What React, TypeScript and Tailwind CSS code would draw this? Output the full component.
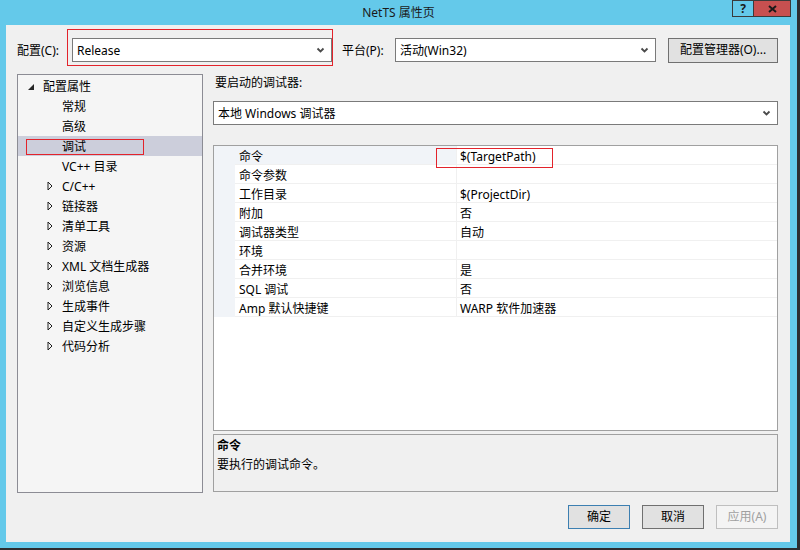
import React from 'react';

// ============================================
// Data
// ============================================

type TreeNode = { label: string; level: 0 | 1; expander?: 'open' | 'closed'; selected?: boolean };

const treeNodes: TreeNode[] = [
  { label: '配置属性', level: 0, expander: 'open' },
  { label: '常规', level: 1 },
  { label: '高级', level: 1 },
  { label: '调试', level: 1, selected: true },
  { label: 'VC++ 目录', level: 1 },
  { label: 'C/C++', level: 1, expander: 'closed' },
  { label: '链接器', level: 1, expander: 'closed' },
  { label: '清单工具', level: 1, expander: 'closed' },
  { label: '资源', level: 1, expander: 'closed' },
  { label: 'XML 文档生成器', level: 1, expander: 'closed' },
  { label: '浏览信息', level: 1, expander: 'closed' },
  { label: '生成事件', level: 1, expander: 'closed' },
  { label: '自定义生成步骤', level: 1, expander: 'closed' },
  { label: '代码分析', level: 1, expander: 'closed' },
];

const props: [string, string][] = [
  ['命令', '$(TargetPath)'],
  ['命令参数', ''],
  ['工作目录', '$(ProjectDir)'],
  ['附加', '否'],
  ['调试器类型', '自动'],
  ['环境', ''],
  ['合并环境', '是'],
  ['SQL 调试', '否'],
  ['Amp 默认快捷键', 'WARP 软件加速器'],
];

// ============================================
// Small pieces
// ============================================

function Chevron() {
  return (
    <svg width="9" height="6" viewBox="0 0 9 6" className="shrink-0">
      <path d="M1.5 1.5 L4.5 4.5 L7.5 1.5" fill="none" stroke="#4a4a4a" strokeWidth="1.8" />
    </svg>
  );
}

function Combo({ value, className }: { value: string; className?: string }) {
  return (
    <div
      className={`h-[24px] bg-white border border-[#7a7a7a] flex items-center justify-between pl-[4px] pr-[6px] ${className ?? ''}`}
    >
      <span className="text-[12px] leading-none text-black pt-[1px]">{value}</span>
      <Chevron />
    </div>
  );
}

function WinButton({
  label,
  className,
}: {
  label: string;
  className?: string;
}) {
  return (
    <div
      className={`h-[24px] flex items-center justify-center text-[12px] bg-[#e1e1e1] border ${className ?? ''}`}
    >
      {label}
    </div>
  );
}

function Expander({ kind }: { kind: 'open' | 'closed' }) {
  if (kind === 'open') {
    return (
      <svg width="6" height="6" viewBox="0 0 6 6" className="mt-[2px]">
        <polygon points="6,0 6,6 0,6" fill="#262626" />
      </svg>
    );
  }
  return (
    <svg width="6" height="10" viewBox="0 0 6 10">
      <polygon points="1,1 5,5 1,9" fill="none" stroke="#1e1e1e" strokeWidth="1" />
    </svg>
  );
}

// ============================================
// Main
// ============================================

export default function App() {
  return (
    <div className="w-[800px] h-[550px] bg-[#2d2d30] font-['Noto_Sans','Noto_Sans_CJK_SC',sans-serif] text-black">
      <div className="w-[797px] h-[548px] bg-[#64c9ea] flex flex-col">
        {/* Title bar */}
        <div className="h-[25px] grid grid-cols-[1fr_auto_1fr] shrink-0">
          <div />
          <div className="text-[12px] leading-[25px] text-[#1a1a1a]">NetTS 属性页</div>
          <div className="flex justify-end items-start pr-[6px]">
            <div className="w-[22px] h-[17px] border border-[#3a3a3a] flex items-center justify-center text-[12px] font-bold leading-none text-[#1a1a1a]">
              ?
            </div>
            <div className="w-[37px] h-[17px] border border-l-0 border-[#3a3a3a] bg-[#c75050] flex items-center justify-center">
              <svg width="9" height="8" viewBox="0 0 9 8">
                <path d="M1 1 L8 7 M8 1 L1 7" stroke="#1a1a1a" strokeWidth="2" />
              </svg>
            </div>
          </div>
        </div>

        {/* Body */}
        <div className="ml-[6px] mr-[7px] h-[517px] bg-[#f0f0f0] pl-[11px] pt-[13px] shrink-0">
          {/* Config row */}
          <div className="flex items-center h-[24px]">
            <span className="w-[55px] text-[12px] pt-[1px]">配置(C):</span>
            <div className="relative">
              <Combo value="Release" className="w-[260px]" />
              <div className="absolute -left-[5px] -top-[9px] w-[266px] h-[37px] border border-[#e3232b]" />
            </div>
            <span className="ml-[10px] w-[53px] text-[12px] pt-[1px]">平台(P):</span>
            <Combo value="活动(Win32)" className="w-[261px]" />
            <WinButton label="配置管理器(O)..." className="ml-[12px] w-[110px] h-[25px] border-[#707070]" />
          </div>

          {/* Main */}
          <div className="flex items-start mt-[12px]">
            {/* Tree */}
            <div className="w-[186px] h-[419px] border border-[#8c8c94] bg-[#f5f5f5] pt-[1px]">
              {treeNodes.map(node => (
                <div
                  key={node.label}
                  className={`relative h-[20px] flex items-center text-[12px] ${node.selected ? 'bg-[#cccedb]' : ''}`}
                >
                  <div className={`flex items-center ${node.level === 0 ? 'w-[25px] pl-[10px]' : 'w-[44px] pl-[29px]'}`}>
                    {node.expander && <Expander kind={node.expander} />}
                  </div>
                  <span className="pt-[1px]">{node.label}</span>
                  {node.selected && (
                    <div className="absolute left-[8px] top-[3px] w-[118px] h-[16px] border border-[#e3232b]" />
                  )}
                </div>
              ))}
            </div>

            {/* Right column */}
            <div className="ml-[10px] w-[565px] flex flex-col">
              <div className="h-[18px] leading-[18px] text-[12px] pl-[2px]">要启动的调试器:</div>
              <Combo value="本地 Windows 调试器" className="mt-[9px] w-[565px]" />

              {/* Property grid */}
              <div className="relative mt-[20px] h-[286px] border border-[#a0a0a0] bg-white">
                {props.map(([name, value], i) => (
                  <div key={name} className="flex h-[19px] text-[12px]">
                    <div className="w-[21px] bg-[#f1f4f8]" />
                    <div
                      className={`w-[222px] border-b border-r border-[#f0f0f0] pl-[4px] pt-[2px] leading-[17px] ${i === 0 ? 'bg-[#f1f4f8]' : ''}`}
                    >
                      {name}
                    </div>
                    <div className="flex-1 border-b border-[#f0f0f0] pl-[3px] pt-[2px] leading-[17px]">{value}</div>
                  </div>
                ))}
                <div className="absolute left-[222px] top-[2px] w-[117px] h-[20px] border border-[#e3232b]" />
              </div>

              {/* Description */}
              <div className="mt-[3px] h-[58px] border border-[#a0a0a0] bg-[#f0f0f0] pl-[3px] pt-[1px] text-[12px] leading-[19px]">
                <div className="font-bold">命令</div>
                <div>要执行的调试命令。</div>
              </div>

              {/* Buttons */}
              <div className="mt-[13px] flex justify-end gap-[12px]">
                <WinButton label="确定" className="w-[62px] border-[#3c7fb1]" />
                <WinButton label="取消" className="w-[62px] border-[#707070]" />
                <WinButton label="应用(A)" className="w-[62px] border-[#bfbfbf] bg-[#f4f4f4] text-[#a0a0a0]" />
              </div>
            </div>
          </div>
        </div>
      </div>
    </div>
  );
}
